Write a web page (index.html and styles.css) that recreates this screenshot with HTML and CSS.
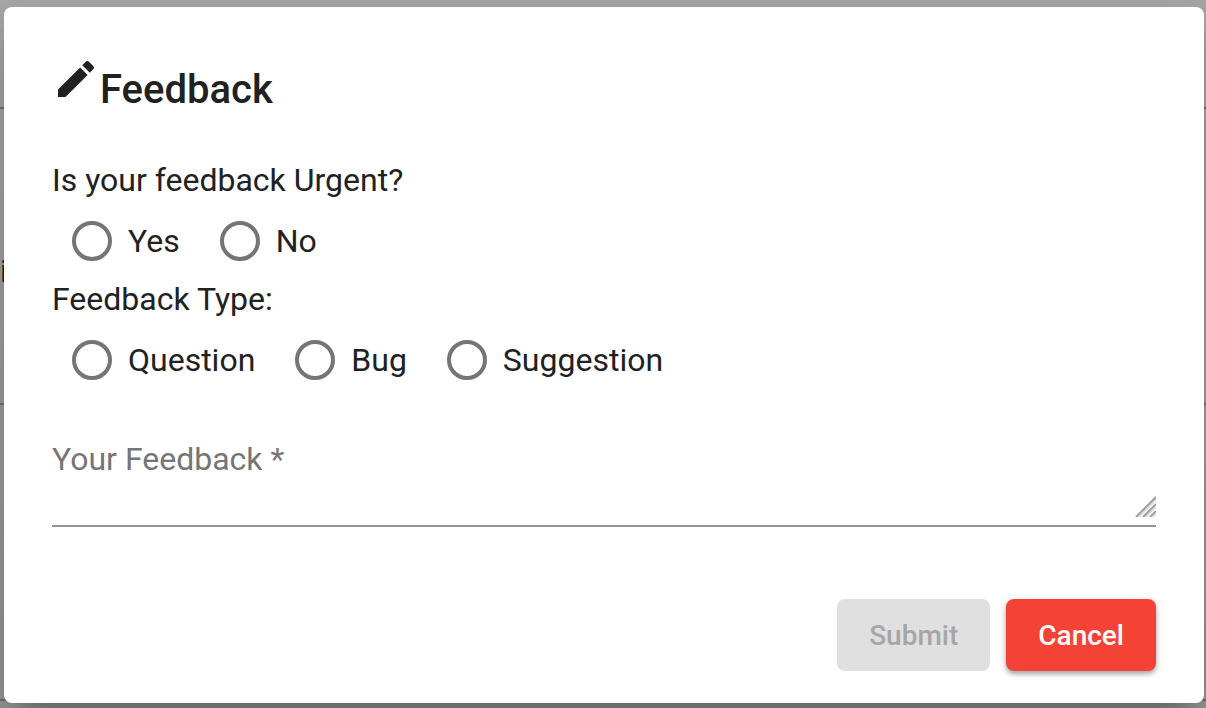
FILE: index.html
```html
<!DOCTYPE html>
<html lang="en">
<head>
<meta charset="utf-8">
<meta name="viewport" content="width=device-width, initial-scale=1">
<title>Feedback</title>
<link rel="stylesheet" href="styles.css">
</head>
<body>
<div class="screen">
  <div class="page" aria-hidden="true">
    <div class="panel panel-first"></div>
    <div class="panel">i</div>
    <div class="panel"></div>
  </div>
  <form class="dialog" role="dialog" aria-labelledby="title">
    <h2 class="title" id="title">
      <svg class="pencil" viewBox="0 0 24 24" aria-hidden="true"><path d="M3 17.25V21h3.75L17.81 9.94l-3.75-3.75L3 17.25zM20.71 7.04a1 1 0 0 0 0-1.41l-2.34-2.34a1 1 0 0 0-1.41 0l-1.83 1.83 3.75 3.75 1.83-1.83z"/></svg>
      <span>Feedback</span>
    </h2>
    <fieldset class="group">
      <legend class="legend">Is your feedback Urgent?</legend>
      <div class="options">
        <label class="option"><input class="radio" type="radio" name="urgent">Yes</label>
        <label class="option"><input class="radio" type="radio" name="urgent">No</label>
      </div>
    </fieldset>
    <fieldset class="group">
      <legend class="legend">Feedback Type:</legend>
      <div class="options">
        <label class="option"><input class="radio" type="radio" name="type">Question</label>
        <label class="option"><input class="radio" type="radio" name="type">Bug</label>
        <label class="option"><input class="radio" type="radio" name="type">Suggestion</label>
      </div>
    </fieldset>
    <div class="field">
      <textarea class="textarea" placeholder="Your Feedback *" aria-label="Your Feedback" required></textarea>
      <svg class="grip" viewBox="0 0 22 22" aria-hidden="true">
        <path class="grip-light" d="M4 22 22 4M11 22 22 11M18 22 22 18"/>
        <path class="grip-dark" d="M2 22 22 2M9 22 22 9M16 22 22 16"/>
      </svg>
    </div>
    <div class="actions">
      <button class="button" type="submit" disabled>Submit</button>
      <button class="button button-warn" type="button">Cancel</button>
    </div>
  </form>
</div>
</body>
</html>
```

FILE: styles.css
```css
* { box-sizing: border-box; }

body {
  margin: 0;
  font-family: Roboto, "Liberation Sans", sans-serif;
  font-size: 32px;
  line-height: 40px;
  color: #212121;
}

.screen {
  position: relative;
  min-height: 100vh;
  padding: 7px 2px 5px 4px;
  overflow: hidden;
}

.page {
  position: absolute;
  inset: 0;
  background: linear-gradient(#a8a8a8, #969696);
}

.panel {
  height: 296px;
  padding-top: 142px;
  border-bottom: 2px solid #707070;
}

.panel-first { height: 109px; padding: 0; }

.dialog {
  position: relative;
  display: flex;
  flex-direction: column;
  min-height: calc(100vh - 12px);
  padding: 48px 48px 32px;
  border-radius: 8px;
  background: #fff;
  box-shadow: 0 22px 30px -14px rgba(0, 0, 0, .3), 0 12px 50px 4px rgba(0, 0, 0, .14);
}

.title {
  display: flex;
  margin: 0 0 38px;
  font-size: 40px;
  font-weight: 500;
  line-height: 64px;
  color: #212121;
}

.title span { padding-top: 3px; }

.pencil {
  width: 48px;
  height: 48px;
  fill: currentColor;
}

.group {
  min-width: 0;
  margin: 0;
  padding: 0;
  border: 0;
}

.legend {
  padding: 0 0 3px;
}

.options {
  display: flex;
  flex-wrap: wrap;
  gap: 40px;
  padding: 0 20px;
}

.option {
  display: flex;
  align-items: center;
  gap: 16px;
  height: 76px;
}

.radio {
  appearance: none;
  width: 40px;
  height: 40px;
  margin: 0;
  border: 4px solid #757575;
  border-radius: 50%;
}

.radio:checked { background: radial-gradient(#757575 10px, transparent 11px); }

.field {
  position: relative;
  display: flex;
  margin-top: 41px;
  border-bottom: 2px solid #949494;
}

.textarea {
  flex: 1;
  min-width: 0;
  height: 86px;
  padding: 0;
  border: 0;
  outline: 0;
  resize: none;
  background: transparent;
  color: inherit;
  font: inherit;
}

.textarea::placeholder { color: #757575; opacity: 1; }

.grip {
  position: absolute;
  right: 0;
  bottom: 8px;
  width: 22px;
  height: 22px;
  fill: none;
}

.grip-dark { stroke: #a0a0a0; stroke-width: 2; }
.grip-light { stroke: #dedede; stroke-width: 3; }

.actions {
  display: flex;
  justify-content: flex-end;
  gap: 16px;
  margin-top: auto;
}

.button {
  height: 72px;
  padding: 2px 32px 0;
  border: 0;
  border-radius: 8px;
  background: #e0e0e0;
  color: #a6a6a6;
  font: 500 28px/70px Roboto, "Liberation Sans", sans-serif;
}

.button-warn {
  background: #f44336;
  color: #fff;
  box-shadow: 0 3px 4px rgba(0, 0, 0, .28), 0 2px 10px rgba(0, 0, 0, .12);
}
```
